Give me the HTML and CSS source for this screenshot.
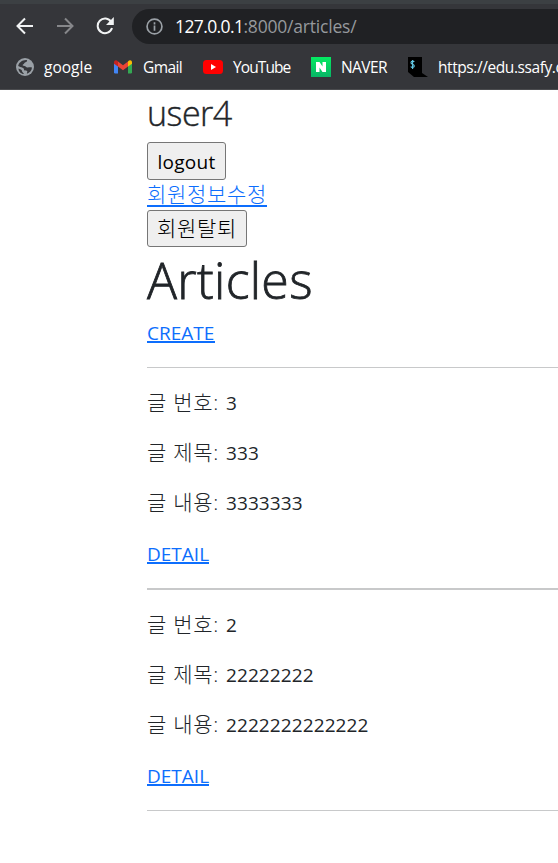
FILE: index.html
```html
<!DOCTYPE html>
<html lang="ko">
<head>
<meta charset="utf-8">
<title>Articles</title>
<link rel="stylesheet" href="styles.css">
</head>
<body>
<header class="browser">
  <div class="toolbar">
    <svg class="nav" viewBox="0 0 18 18"><path d="M17 9H2M9 1.500 1.500 9 9 16.500"/></svg>
    <svg class="nav nav-off" viewBox="0 0 18 18"><path d="M1 9h15M9 1.500 16.500 9 9 16.500"/></svg>
    <svg class="nav" viewBox="0 0 18 18"><path d="M15.200 5A7.300 7.300 0 1 0 16 11"/><path class="solid" d="M17.800 0v8H10z"/></svg>
    <div class="address">
      <svg class="info" viewBox="0 0 16 16"><circle cx="8" cy="8" r="7"/><path d="M8 7v5M8 4v2"/></svg>
      <span class="url"><b>127.0.0.1</b><i>:8000/articles/</i></span>
    </div>
  </div>
  <nav class="bookmarks">
    <a class="bm bm-google"><svg class="ico18" viewBox="0 0 18 18"><circle cx="9" cy="9" r="9" fill="#9aa0a6"/><path d="M10 2c2 0 1 2-.5 2.200C8 4.500 8.500 6 7 6.500c-1 .5 0 1.500 1.500 1.500C10 8 10 10 12 9.500c1-.5 2-.5 4 0-.2 3-2.500 5.500-5 6.200-.5-1 1-1.700 0-2.700-1-.8-3 .2-3-1.500C8 9.500 5 9.500 2.200 8 2.500 5 6 2 10 2z" fill="#35363a"/><path d="M2.500 10.500C4 11 6 11.500 6 13c0 1 1 1.500 2 3-3 0-5.500-2.500-5.500-5.500z" fill="#35363a"/></svg><span>google</span></a>
    <a class="bm bm-gmail"><svg class="ico18" viewBox="0 0 18 18"><path fill="#4285f4" d="M0 4.500 4 7.500v8H1.200Q0 15.500 0 14.300z"/><path fill="#34a853" d="M18 4.500 14 7.500v8h2.800q1.200 0 1.200-1.200z"/><path fill="#ea4335" d="M4 3.500 9 7.300l5-3.800v5L9 12.300 4 8.500z"/><path fill="#c5221f" d="M0 4.500C0 2 2.500 1.500 4 3.500v5L0 5.700z"/><path fill="#fbbc04" d="M18 4.500c0-2.500-2.500-3-4-1v5l4-2.800z"/></svg><span>Gmail</span></a>
    <a class="bm bm-youtube"><svg class="ico20" viewBox="0 0 20 20"><rect y="3" width="20" height="14" rx="3.500" fill="#f00"/><path d="M8 7v6l5-3z" fill="#fff"/></svg><span>YouTube</span></a>
    <a class="bm bm-naver"><svg class="ico20" viewBox="0 0 20 20"><defs><linearGradient id="g" x2="0" y2="1"><stop stop-color="#04eb62"/><stop offset="1" stop-color="#08b566"/></linearGradient></defs><path fill="url(#g)" d="M0 0h20v20H0z"/><path fill="#fff" d="M5 5h3.500l3 4.500V5H15v10h-3.500l-3-4.500V15H5z"/></svg><span>NAVER</span></a>
    <a class="bm bm-ssafy"><svg class="ico20" viewBox="0 0 20 20"><path d="M0 0h14v16l6 4H6l-6-5z"/><path d="M6.200 5C5.500 3.500 3 4 3 5.700c0 2 3.300 1.300 3.300 3.300 0 1.700-2.700 2-3.500.5M4.600 3v9" fill="none" stroke="#62c9e5" stroke-width="1.100"/></svg><span>https://edu.ssafy.c</span></a>
  </nav>
</header>
<main class="page">
  <h3 class="user">user4</h3>
  <button class="btn logout">logout</button>
  <a class="link edit" href="#">회원정보수정</a>
  <button class="btn leave">회원탈퇴</button>
  <h1 class="title">Articles</h1>
  <a class="link create" href="#">CREATE</a>
  <hr>
  <article>
    <p>글 번호: <span class="num">3</span></p>
    <p>글 제목: <span class="num">333</span></p>
    <p>글 내용: <span class="num">3333333</span></p>
    <a class="link detail" href="#">DETAIL</a>
  </article>
  <hr class="thick">
  <article>
    <p>글 번호: <span class="num">2</span></p>
    <p>글 제목: <span class="num">22222222</span></p>
    <p>글 내용: <span class="num">2222222222222</span></p>
    <a class="link detail" href="#">DETAIL</a>
  </article>
  <hr>
</main>
</body>
</html>
```
FILE: styles.css
```css
* { box-sizing: border-box; }
html { overflow: hidden; }
body {
  margin: 0;
  height: 863px;
  overflow: hidden;
  background: #fff;
  color: #212529;
  font: 300 20px/30px "Open Sans", "Noto Sans CJK KR", sans-serif;
}
.browser {
  height: 90px;
  overflow: hidden;
  background: #35363a;
  border-top: 4px solid #3c4043;
  border-bottom: 1px solid #4b4c4f;
  color: #fff;
  font-weight: 400;
}
.toolbar { display: flex; align-items: center; height: 40px; padding: 5px 0 0 16px; }
.nav { width: 18px; height: 18px; margin-right: 22px; flex: none; position: relative; top: -1px; fill: none; stroke: #f1f3f4; stroke-width: 2; }
.nav-off { stroke: #86878a; }
.nav .solid { fill: #f1f3f4; stroke: none; }
.address { display: flex; align-items: center; flex: 1; height: 35px; margin-left: -4px; padding-left: 14px; border-radius: 18px 0 0 18px; background: #202124; }
.info { width: 17px; height: 17px; fill: none; stroke: #9aa0a6; stroke-width: 1.6; }
.url { margin-left: 12px; font-size: 17.5px; line-height: 35px; white-space: nowrap; }
.url b { font-weight: 400; letter-spacing: -.6px; }
.url i { font-style: normal; color: #96999d; letter-spacing: -.2px; }
.bookmarks { display: flex; align-items: center; height: 45px; padding-left: 16px; font-size: 15.5px; line-height: 20px; white-space: nowrap; }
.bm { display: flex; align-items: center; flex: none; }
.bm-google { width: 98px; gap: 10px; }
.bm-gmail { width: 89px; gap: 11px; letter-spacing: -.6px; }
.bm-youtube { width: 108px; gap: 10px; letter-spacing: -.9px; }
.bm-naver { width: 97px; gap: 10px; letter-spacing: -.6px; }
.bm-ssafy { width: 151px; gap: 10px; letter-spacing: -.42px; }
.ico18 { width: 18px; height: 18px; flex: none; }
.ico20 { width: 20px; height: 20px; flex: none; }
.page { display: flex; flex-direction: column; align-items: flex-start; padding-left: 147px; }
h1, h3, p { margin: 0; font-weight: 300; }
.user { height: 52px; font-size: 34px; line-height: 47px; letter-spacing: -.5px; -webkit-text-stroke: .4px; }
.btn { border: 1px solid #767676; border-radius: 3px; background: #efefef; color: #000; padding: 0; font: 400 19px/34px "Open Sans", "Noto Sans CJK KR", sans-serif; text-align: center; white-space: nowrap; }
.logout { width: 79px; height: 38px; line-height: 38px; letter-spacing: .3px; }
.link { color: #0d6efd; text-decoration: none; border-bottom: 2px solid #0d6efd; white-space: nowrap; }
.edit { width: 120px; height: 27px; margin-bottom: 3px; font-size: 21px; line-height: 29px; letter-spacing: .68px; }
.leave { width: 100px; height: 37px; font-weight: 300; font-size: 21px; line-height: 32px; padding-bottom: 2px; letter-spacing: .68px; }
.title { height: 73px; font-size: 50px; line-height: 66px; letter-spacing: .3px; -webkit-text-stroke: .8px; }
.create, .detail { height: 23px; font-size: 19px; line-height: 27px; font-weight: 400; }
.create { width: 68px; }
.detail { width: 62px; margin-top: 2px; }
hr { align-self: stretch; width: auto; height: 1px; margin: 24px 0 21px; border: 0; background: #c8c9ca; }
.thick { height: 2px; }
article { display: flex; flex-direction: column; align-items: flex-start; }
article p { height: 50px; font-size: 21px; line-height: 27px; letter-spacing: .68px; white-space: nowrap; }
.num { margin-left: 1px; font-size: 19px; font-weight: 400; letter-spacing: .1px; }
```
